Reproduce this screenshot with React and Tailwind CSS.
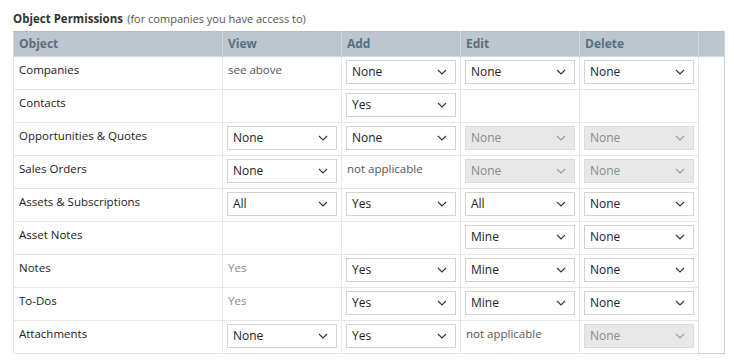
import React from "react"

const rows = [
  { name: "Companies", view: { t: "see above" }, add: { s: "None" }, edit: { s: "None" }, del: { s: "None" } },
  { name: "Contacts", view: null, add: { s: "Yes" }, edit: null, del: null },
  { name: "Opportunities & Quotes", view: { s: "None" }, add: { s: "None" }, edit: { s: "None", off: true }, del: { s: "None", off: true } },
  { name: "Sales Orders", view: { s: "None" }, add: { t: "not applicable" }, edit: { s: "None", off: true }, del: { s: "None", off: true } },
  { name: "Assets & Subscriptions", view: { s: "All" }, add: { s: "Yes" }, edit: { s: "All" }, del: { s: "None" } },
  { name: "Asset Notes", view: null, add: null, edit: { s: "Mine" }, del: { s: "None" } },
  { name: "Notes", view: { t: "Yes", light: true }, add: { s: "Yes" }, edit: { s: "Mine" }, del: { s: "None" } },
  { name: "To-Dos", view: { t: "Yes", light: true }, add: { s: "Yes" }, edit: { s: "Mine" }, del: { s: "None" } },
  { name: "Attachments", view: { s: "None" }, add: { s: "Yes" }, edit: { t: "not applicable" }, del: { s: "None", off: true } },
]

function Chevron({ off }) {
  return (
    <svg width="10" height="6" viewBox="0 0 10 6" className="shrink-0">
      <path d="M1 1 L5 5 L9 1" fill="none" stroke={off ? "#9a9a9a" : "#333"} strokeWidth="1.1" />
    </svg>
  )
}

function Select({ value, off }) {
  return (
    <div
      className={`flex items-center justify-between h-[24px] w-[110px] pl-[5px] pr-[8px] border text-[12px] ${
        off ? "bg-[#e8e8e8] border-[#dcdcdc] text-[#8a8a8a]" : "bg-white border-[#d3d3d3] text-[#222]"
      }`}
    >
      <span>{value}</span>
      <Chevron off={off} />
    </div>
  )
}

function Cell({ c }) {
  if (!c) return <td className="border border-[#e6e6e6] align-top h-[33px]" />
  if (c.s)
    return (
      <td className="border border-[#e6e6e6] align-top h-[33px] pl-[4px] pt-[3px]">
        <Select value={c.s} off={c.off} />
      </td>
    )
  return (
    <td
      className={`border border-[#e6e6e6] align-top h-[33px] pl-[5px] pt-[4px] text-[11.5px] ${
        c.light ? "text-[#8a8a8a]" : "text-[#555]"
      }`}
    >
      {c.t}
    </td>
  )
}

export default function App() {
  return (
    <div className="bg-white w-[734px] h-[360px] pl-[13px] pt-[8px]" style={{ fontFamily: '"Open Sans", "Noto Sans", sans-serif' }}>
      <div className="text-[#333] leading-[18px] mb-[3px]">
        <span className="font-bold text-[11.5px]">Object Permissions</span>{" "}
        <span className="text-[11px] text-[#555]">(for companies you have access to)</span>
      </div>
      <table className="border-collapse table-fixed w-[711px] border border-[#cfcfcf]">
        <colgroup>
          <col className="w-[209px]" />
          <col className="w-[119px]" />
          <col className="w-[119px]" />
          <col className="w-[119px]" />
          <col className="w-[119px]" />
          <col className="w-[26px]" />
        </colgroup>
        <thead>
          <tr className="bg-[#bdc6ce] h-[25px]">
            {["Object", "View", "Add", "Edit", "Delete", ""].map((h, i) => (
              <th
                key={i}
                className="text-left font-bold text-[12px] text-[#5a6e80] pl-[5px] border border-[#d3d9de] border-t-[#b3bcc4]"
              >
                {h}
              </th>
            ))}
          </tr>
        </thead>
        <tbody>
          {rows.map((r, i) => (
            <tr key={r.name}>
              <td className="border border-[#e6e6e6] align-top h-[33px] pl-[5px] pt-[4px] text-[11.5px] text-[#1a1a1a]">
                {r.name}
              </td>
              <Cell c={r.view} />
              <Cell c={r.add} />
              <Cell c={r.edit} />
              <Cell c={r.del} />
              {i === 0 && <td rowSpan={9} className="border-l border-l-[#e6e6e6] border-r border-r-[#cfcfcf] border-b border-b-[#cfcfcf]" />}
            </tr>
          ))}
        </tbody>
      </table>
    </div>
  )
}
